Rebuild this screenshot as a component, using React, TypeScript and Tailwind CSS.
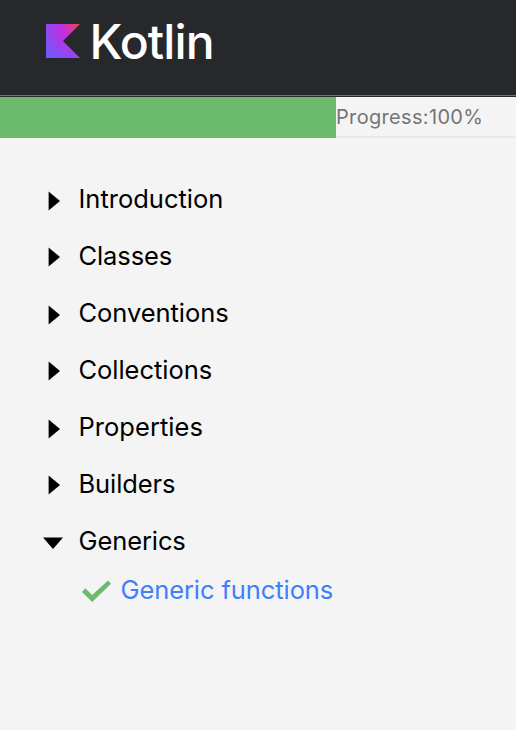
const chapters = [
  { title: 'Introduction', tracking: 'tracking-[0px]', arrow: 'mt-0.5' },
  { title: 'Classes', tracking: 'tracking-[-0.1px]', arrow: 'mt-0' },
  { title: 'Conventions', tracking: 'tracking-[-0.06px]', arrow: 'mt-0.5' },
  { title: 'Collections', tracking: 'tracking-[-0.04px]', arrow: 'mt-0' },
  { title: 'Properties', tracking: 'tracking-[0.04px]', arrow: 'mt-0.5' },
  { title: 'Builders', tracking: 'tracking-[-0.1px]', arrow: 'mt-0' },
];

function KotlinMark() {
  return (
    <svg className="h-[34px] w-[34px] shrink-0" viewBox="0 0 34 34">
      <defs>
        <radialGradient id="kotlin" gradientUnits="userSpaceOnUse" cx="33" cy="1" r="41">
          <stop offset="0" stopColor="#e44857" />
          <stop offset="0.42" stopColor="#c32de1" />
          <stop offset="1" stopColor="#7359fa" />
        </radialGradient>
      </defs>
      <path d="M0 0H34L17 17L34 34H0Z" fill="url(#kotlin)" />
    </svg>
  );
}

export default function App() {
  return (
    <div className="h-[730px] w-[516px] overflow-hidden bg-[#f4f4f4] font-['Inter',sans-serif]">
      <header className="flex h-[97px] items-start border-b border-[#27282c] bg-[#27282c] pl-[46px] pt-[23.5px] shadow-[inset_0_-1px_0_#6f7073]">
        <KotlinMark />
        <span className="ml-[9.5px] -mt-[5.5px] text-[48px] font-medium leading-[48px] tracking-[-0.9px] text-white">Kotlin</span>
      </header>
      <div className="flex h-[41px]">
        <div className="w-[336px] bg-[#6cba6b]" />
        <div className="h-[41px] flex-1 border-b-2 border-[#e9e9e9] text-[20px] leading-[41px] tracking-[0.33px] text-[#747474]">Progress:100%</div>
      </div>
      <nav className="pl-[43px] pt-[33px] text-[25.5px] text-black">
        {chapters.map((c) => (
          <div key={c.title} className="flex h-[57px] items-center">
            <svg className={`h-5 w-9 shrink-0 ${c.arrow}`} viewBox="0 0 36 20">
              <path d="M5.6 .5L17 10L5.6 19.5Z" />
            </svg>
            <span className={`-ml-[0.5px] ${c.tracking}`}>{c.title}</span>
          </div>
        ))}
        <div className="flex h-[57px] items-center">
          <svg className="mt-1 h-5 w-9 shrink-0" viewBox="0 0 36 20">
            <path d="M0 3.5H20L10 15Z" />
          </svg>
          <span className="-ml-[0.5px] tracking-[-0.1px]">Generics</span>
        </div>
        <div className="flex h-10 items-center pl-[38px] text-[#3f7ffa]">
          <svg className="mt-0.5 h-6 w-10 shrink-0" viewBox="0 0 40 24">
            <path d="M1 13L4.3 9.3L11.2 16L27 1.5L30 4.8L11.2 23Z" fill="#6cba6b" />
          </svg>
          <span className="-ml-[0.5px] tracking-[-0.09px]">Generic functions</span>
        </div>
      </nav>
    </div>
  );
}
